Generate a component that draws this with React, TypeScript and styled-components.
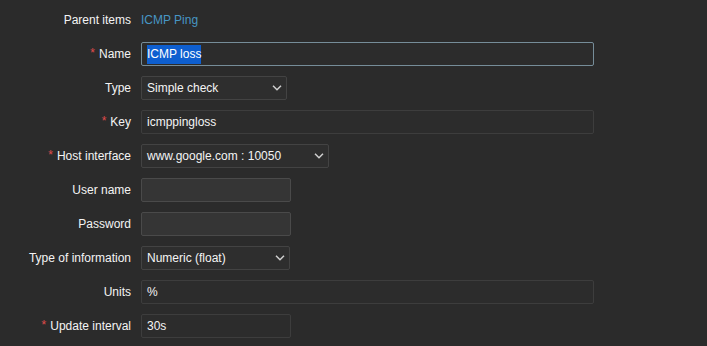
import styled, { createGlobalStyle } from "styled-components";

const Global = createGlobalStyle`
  html, body {
    margin: 0;
    background: #2b2b2b;
  }
  body {
    font-family: "Liberation Sans", Arial, sans-serif;
    font-size: 12px;
    color: #f2f2f2;
  }
`;

const Form = {
  Grid: styled.div`
    display: grid;
    grid-template-columns: 131px 1fr;
    grid-auto-rows: 24px;
    align-content: start;
    column-gap: 10px;
    row-gap: 10px;
    padding-top: 8px;
    width: 707px;
    height: 346px;
    box-sizing: border-box;
  `,
  Label: styled.div`
    height: 24px;
    display: flex;
    align-items: center;
    justify-content: flex-end;
    white-space: nowrap;
    color: #f4f4f4;
  `,
  Star: styled.span`
    color: #e04b4b;
    margin-right: 4px;
    font-size: 12px;
    position: relative;
    top: -1px;
  `,
  Cell: styled.div`
    height: 24px;
    display: flex;
    align-items: center;
  `,
  Link: styled.span`
    color: #4796c4;
  `,
  Input: styled.div<{ $w: number; $empty?: boolean; $focus?: boolean }>`
    width: ${(p) => p.$w}px;
    height: 24px;
    box-sizing: border-box;
    padding: 0 5px;
    display: flex;
    align-items: center;
    border-radius: 2px;
    background: ${(p) => (p.$empty ? "#353535" : "#2c2c2c")};
    border: 1px solid
      ${(p) => (p.$focus ? "#768d99" : p.$empty ? "#4a4a4a" : "#3d3d3d")};
    color: #f4f4f4;
    white-space: nowrap;
  `,
  Selected: styled.span`
    background: #0e5fd0;
    color: #ffffff;
    padding: 2px 0 3px;
  `,
  Select: styled.div<{ $w: number }>`
    width: ${(p) => p.$w}px;
    height: 24px;
    box-sizing: border-box;
    padding: 0 4px 0 5px;
    display: flex;
    align-items: center;
    justify-content: space-between;
    border-radius: 2px;
    background: #2e2e2e;
    border: 1px solid #434343;
    color: #f4f4f4;
    white-space: nowrap;
  `,
};

const Chevron = () => (
  <svg width="10" height="6" viewBox="0 0 10 6">
    <path d="M1 0.8 L5 4.8 L9 0.8" fill="none" stroke="#d0d0d0" strokeWidth="1.5" />
  </svg>
);

const Label = ({ text, req }: { text: string; req?: boolean }) => (
  <Form.Label>
    {req && <Form.Star>*</Form.Star>}
    {text}
  </Form.Label>
);

export default function App() {
  return (
    <>
      <Global />
      <Form.Grid>
        <Label text="Parent items" />
        <Form.Cell>
          <Form.Link>ICMP Ping</Form.Link>
        </Form.Cell>

        <Label text="Name" req />
        <Form.Cell>
          <Form.Input $w={453} $focus>
            <Form.Selected>ICMP loss</Form.Selected>
          </Form.Input>
        </Form.Cell>

        <Label text="Type" />
        <Form.Cell>
          <Form.Select $w={146}>
            Simple check
            <Chevron />
          </Form.Select>
        </Form.Cell>

        <Label text="Key" req />
        <Form.Cell>
          <Form.Input $w={453}>icmppingloss</Form.Input>
        </Form.Cell>

        <Label text="Host interface" req />
        <Form.Cell>
          <Form.Select $w={188}>
            www.google.com : 10050
            <Chevron />
          </Form.Select>
        </Form.Cell>

        <Label text="User name" />
        <Form.Cell>
          <Form.Input $w={150} $empty />
        </Form.Cell>

        <Label text="Password" />
        <Form.Cell>
          <Form.Input $w={150} $empty />
        </Form.Cell>

        <Label text="Type of information" />
        <Form.Cell>
          <Form.Select $w={149}>
            Numeric (float)
            <Chevron />
          </Form.Select>
        </Form.Cell>

        <Label text="Units" />
        <Form.Cell>
          <Form.Input $w={453}>%</Form.Input>
        </Form.Cell>

        <Label text="Update interval" req />
        <Form.Cell>
          <Form.Input $w={150}>30s</Form.Input>
        </Form.Cell>
      </Form.Grid>
    </>
  );
}
